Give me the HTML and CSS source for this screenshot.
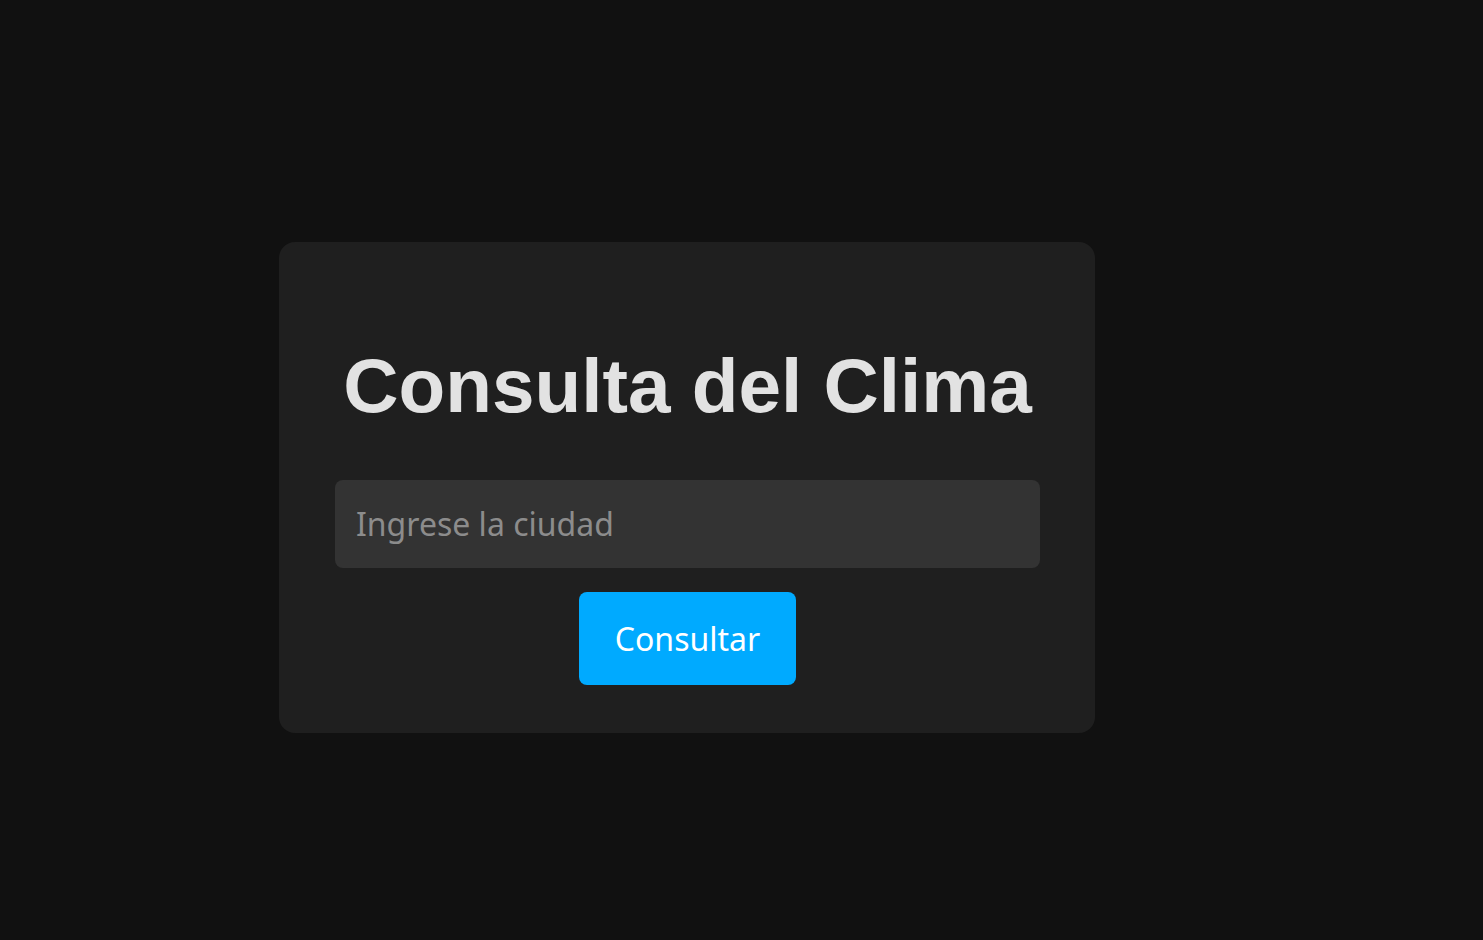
FILE: index.html
```html
<!DOCTYPE html>
<html lang="es">
<head>
<meta charset="utf-8">
<title>Consulta del Clima</title>
<link rel="stylesheet" href="styles.css">
</head>
<body>
<main class="page">
  <section class="card">
    <h1 class="title">Consulta del Clima</h1>
    <input class="city" type="text" placeholder="Ingrese la ciudad">
    <button class="submit" type="button">Consultar</button>
  </section>
</main>
</body>
</html>
```
FILE: styles.css
```css
html, body {
  margin: 0;
  height: 100%;
  background: #111111;
}
.page {
  box-sizing: border-box;
  min-height: 100%;
  display: flex;
  align-items: flex-start;
  padding: 242px 0 0 279px;
}
.card {
  box-sizing: border-box;
  width: 816px;
  padding: 48px 55px 48px 56px;
  background: #1f1f1f;
  border-radius: 16px;
  display: flex;
  flex-direction: column;
  align-items: center;
}
.title {
  margin: 52px 0 50px;
  font-family: "Liberation Sans", Arial, sans-serif;
  font-weight: 700;
  font-size: 76.5px;
  line-height: 88px;
  color: #e2e2e2;
  white-space: nowrap;
}
.city {
  box-sizing: border-box;
  width: 100%;
  height: 88px;
  margin: 0;
  padding: 21px 21px 23px;
  border: none;
  outline: none;
  border-radius: 8px;
  background: #333333;
  color: #e2e2e2;
  font-family: "Noto Sans", sans-serif;
  font-size: 32px;
  line-height: 44px;
}
.city::placeholder {
  color: #8c8c8c;
}
.submit {
  margin: 24px 0 0;
  padding: 24px 35.5px;
  border: none;
  border-radius: 8px;
  background: #00aaff;
  color: #ffffff;
  font-family: "Noto Sans", sans-serif;
  font-size: 32px;
  line-height: 45px;
  cursor: pointer;
}
```
